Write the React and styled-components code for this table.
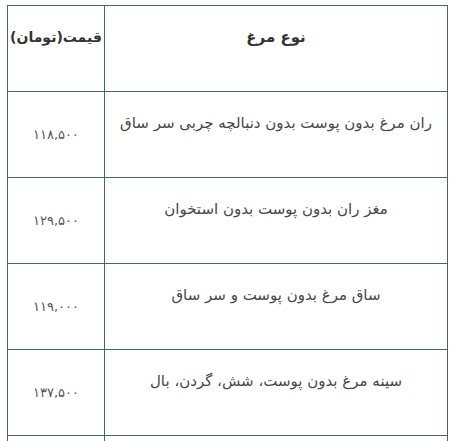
import React from 'react'
import styled, { createGlobalStyle } from 'styled-components'

const GlobalStyle = createGlobalStyle`
  html, body {
    margin: 0;
    padding: 0;
    background: #fff;
  }
  body {
    font-family: "DejaVu Sans", "Noto Sans", sans-serif;
  }
`

const rows = [
  { name: 'ران مرغ بدون پوست بدون دنبالچه چربی سر ساق', price: '۱۱۸,۵۰۰' },
  { name: 'مغز ران بدون پوست بدون استخوان', price: '۱۲۹,۵۰۰' },
  { name: 'ساق مرغ بدون پوست و سر ساق', price: '۱۱۹,۰۰۰' },
  { name: 'سینه مرغ بدون پوست، شش، گردن، بال', price: '۱۳۷,۵۰۰' },
  { name: '', price: '' },
]

const Page = styled.div`
  padding: 5px 0 0 7px;
  height: 441px;
  overflow: hidden;
  box-sizing: border-box;
`

const Table = styled.table`
  direction: rtl;
  border-collapse: collapse;
  width: 441px;
  table-layout: fixed;
`

const Row = styled.tr`
  height: 86px;
`

const NameCell = styled.td`
  border: 1px solid #3c6789;
  vertical-align: top;
  text-align: center;
  padding: 19px 8px 0;
  font-size: 15px;
  line-height: 24px;
  color: ${(p) => (p.$head ? '#333' : '#474747')};
  font-weight: ${(p) => (p.$head ? 700 : 400)};
`

const PriceCell = styled.td`
  width: 96px;
  border: 1px solid #3c6789;
  text-align: center;
  vertical-align: ${(p) => (p.$head ? 'top' : 'middle')};
  padding: ${(p) => (p.$head ? '19px 0 0' : '0')};
  font-size: ${(p) => (p.$head ? '14px' : '13px')};
  line-height: 24px;
  color: ${(p) => (p.$head ? '#333' : '#555')};
  font-weight: ${(p) => (p.$head ? 700 : 400)};
  white-space: nowrap;
`

export default function App() {
  return (
    <Page>
      <GlobalStyle />
      <Table>
        <tbody>
          <Row>
            <NameCell $head>نوع مرغ</NameCell>
            <PriceCell $head>قیمت(تومان)</PriceCell>
          </Row>
          {rows.map((r, i) => (
            <Row key={i}>
              <NameCell>{r.name}</NameCell>
              <PriceCell>{r.price}</PriceCell>
            </Row>
          ))}
        </tbody>
      </Table>
    </Page>
  )
}
